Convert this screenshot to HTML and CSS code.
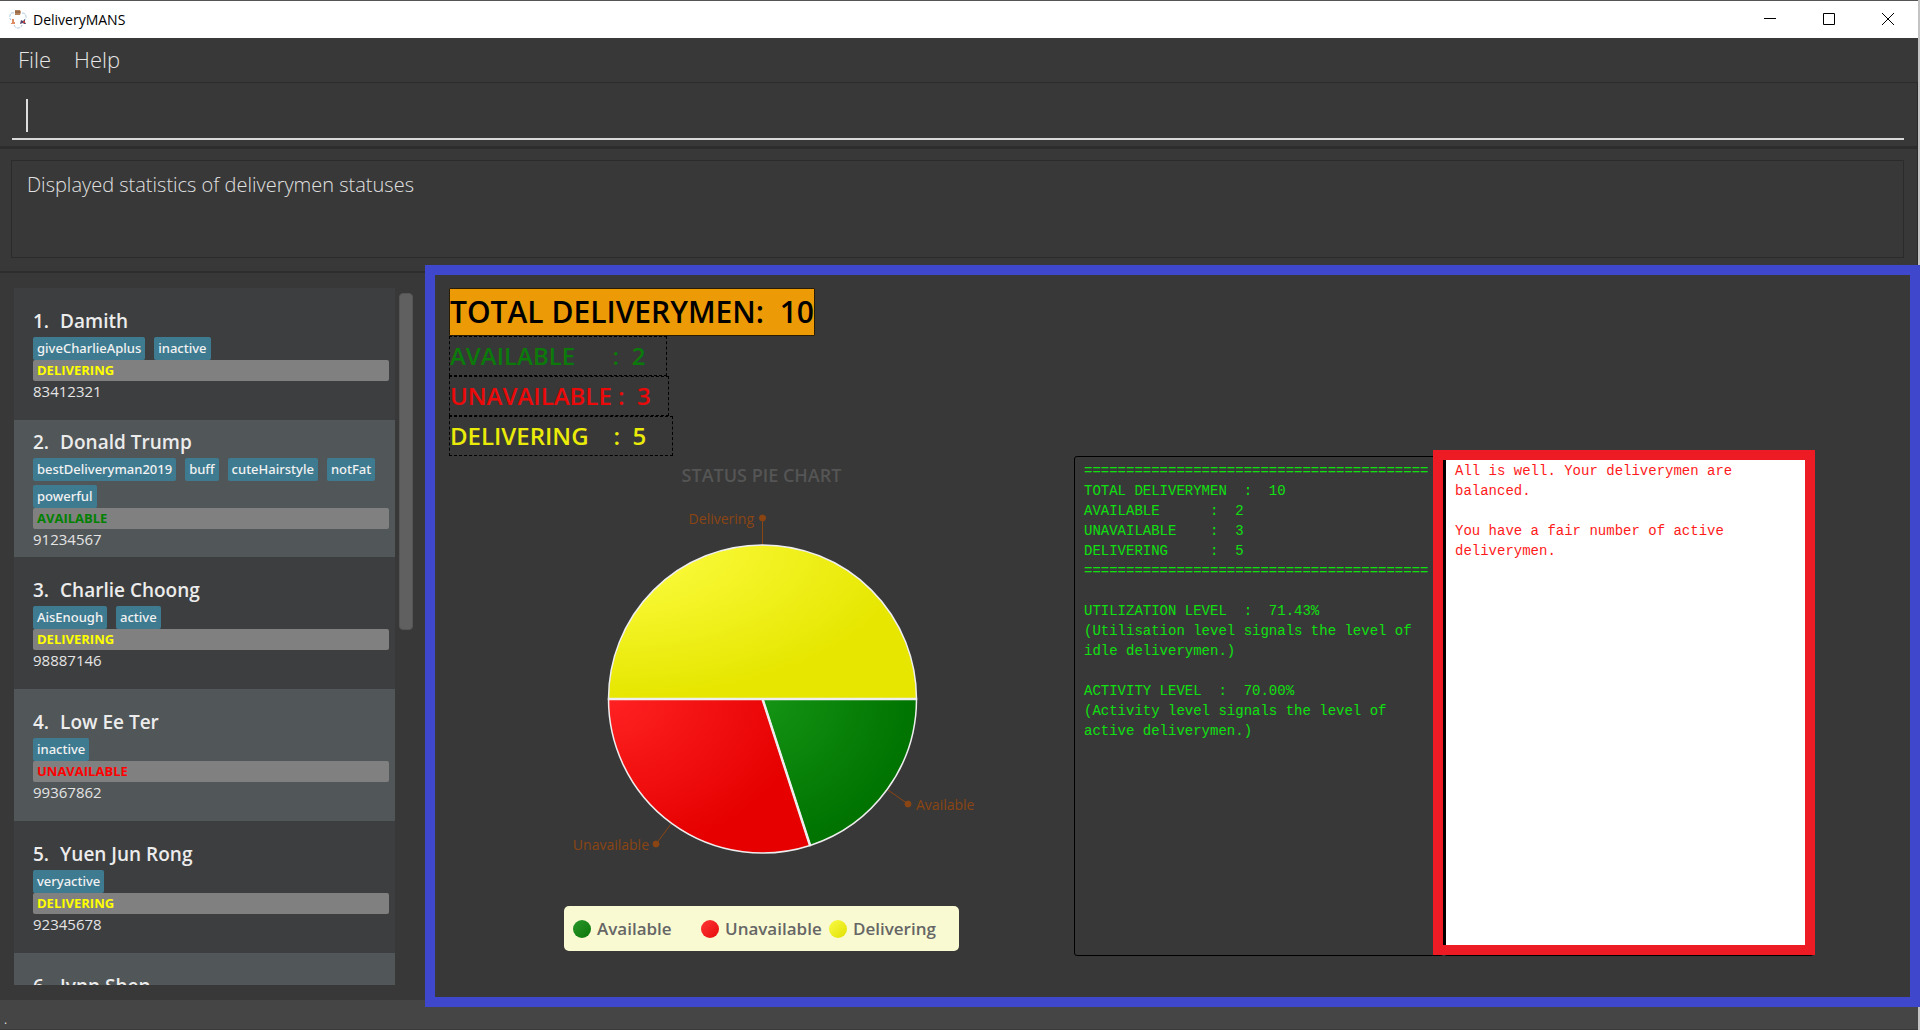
FILE: index.html
```html
<!DOCTYPE html>
<html lang="en">
<head>
<meta charset="utf-8">
<title>DeliveryMANS</title>
<link rel="stylesheet" href="styles.css">
</head>
<body>
<div class="window">
  <header class="titlebar">
    <svg class="app-icon" width="18" height="20" viewBox="0 0 18 20" aria-hidden="true">
      <path d="M5 4 Q1 3 1 7 Q0 9 2 11 M13 4 Q17 4 17 8 Q18 10 15 11 M5 16 Q6 19 9 19 Q12 19 13 16" fill="none" stroke="#a9c6dc" stroke-width="1" stroke-dasharray="3 1"/>
      <path d="M6 1 h5 l1 2 -1 3 h-5 z" fill="#b5835c"/>
      <path d="M6 3 h5" stroke="#7d5138"/>
      <path d="M3 10 h2 v3 h1 v2 h-4 v-1 h1 z" fill="#e08a63"/>
      <path d="M12 11 l2 1 2 -2 v3 l1 2 h-2 l-1 -1 -3 1 z" fill="#51476b"/>
      <path d="M14 12 h2 v2 h-2 z" fill="#c8433f"/>
    </svg>
    <h1 class="app-title">DeliveryMANS</h1>
    <div class="window-controls">
      <button class="control" type="button" aria-label="Minimize"><svg width="12" height="12" viewBox="0 0 12 12"><path d="M0 5.5h12" stroke="#000"/></svg></button>
      <button class="control" type="button" aria-label="Maximize"><svg width="12" height="12" viewBox="0 0 12 12"><path d="M.5.5h11v11h-11z" fill="none" stroke="#000"/></svg></button>
      <button class="control" type="button" aria-label="Close"><svg width="12" height="12" viewBox="0 0 12 12"><path d="M0 0l12 12M12 0L0 12" stroke="#000"/></svg></button>
    </div>
  </header>

  <nav class="menubar">
    <button class="menu" type="button">File</button>
    <button class="menu" type="button">Help</button>
  </nav>

  <div class="command-pane">
    <div class="command-field">
      <input class="command-input" type="text" aria-label="Command">
      <span class="caret"></span>
    </div>
  </div>

  <div class="result-pane">
    <div class="result" role="status">Displayed statistics of deliverymen statuses</div>
  </div>

  <main class="main">
    <section class="list-pane" aria-label="Deliverymen">
      <ol class="list">
        <li class="cell">
          <h2 class="name"><span>1.</span><span>Damith</span></h2>
          <div class="tags"><span class="tag">giveCharlieAplus</span><span class="tag">inactive</span></div>
          <div class="status delivering">DELIVERING</div>
          <div class="phone">83412321</div>
        </li>
        <li class="cell">
          <h2 class="name"><span>2.</span><span>Donald Trump</span></h2>
          <div class="tags"><span class="tag">bestDeliveryman2019</span><span class="tag">buff</span><span class="tag">cuteHairstyle</span><span class="tag">notFat</span><span class="tag">powerful</span></div>
          <div class="status available">AVAILABLE</div>
          <div class="phone">91234567</div>
        </li>
        <li class="cell">
          <h2 class="name"><span>3.</span><span>Charlie Choong</span></h2>
          <div class="tags"><span class="tag">AisEnough</span><span class="tag">active</span></div>
          <div class="status delivering">DELIVERING</div>
          <div class="phone">98887146</div>
        </li>
        <li class="cell">
          <h2 class="name"><span>4.</span><span>Low Ee Ter</span></h2>
          <div class="tags"><span class="tag">inactive</span></div>
          <div class="status unavailable">UNAVAILABLE</div>
          <div class="phone">99367862</div>
        </li>
        <li class="cell">
          <h2 class="name"><span>5.</span><span>Yuen Jun Rong</span></h2>
          <div class="tags"><span class="tag">veryactive</span></div>
          <div class="status delivering">DELIVERING</div>
          <div class="phone">92345678</div>
        </li>
        <li class="cell">
          <h2 class="name"><span>6.</span><span>Jynn Shen</span></h2>
        </li>
      </ol>
      <div class="scrollbar"><div class="thumb"></div></div>
    </section>

    <section class="stats-pane" aria-label="Statistics">
      <div class="totals">
        <div class="total">TOTAL DELIVERYMEN:  10</div>
        <div class="count count-available">AVAILABLE      :  2</div>
        <div class="count count-unavailable">UNAVAILABLE :  3</div>
        <div class="count count-delivering">DELIVERING    :  5</div>
      </div>
      <div class="details">
        <div class="chart">
          <h2 class="chart-title">STATUS PIE CHART</h2>
          <svg class="pie" width="625" height="414" viewBox="0 0 625 414" role="img" aria-label="Status pie chart">
            <defs>
              <radialGradient id="g-yellow" cx="0" cy="0" r="1"><stop offset="0" stop-color="#ffff48"/><stop offset="1" stop-color="#e6e600"/></radialGradient>
              <radialGradient id="g-red" cx="0" cy="0" r="1"><stop offset="0" stop-color="#ff2222"/><stop offset="1" stop-color="#e60000"/></radialGradient>
              <radialGradient id="g-green" cx="0" cy="0" r="1"><stop offset="0" stop-color="#149414"/><stop offset="1" stop-color="#007300"/></radialGradient>
            </defs>
            <g class="leader">
              <path d="M313.500 54V26M439 298L459 312M222 332L207 352"/>
              <circle cx="313.500" cy="26" r="3"/><circle cx="459" cy="312" r="3"/><circle cx="207" cy="352" r="3"/>
            </g>
            <g stroke="#eee" stroke-width="1.500">
              <path d="M313.500 207H467.500A154 154 0 0 1 361.100 353.500Z" fill="url(#g-green)"/>
              <path d="M313.500 207L361.100 353.500A154 154 0 0 1 159.500 207Z" fill="url(#g-red)"/>
              <path d="M159.500 207A154 154 0 0 1 467.500 207Z" fill="url(#g-yellow)"/>
              <path d="M159.500 207H467.500M313.500 207L361.100 353.500" stroke-width="2.500"/>
            </g>
            <g class="pie-label">
              <text x="305" y="32" text-anchor="end">Delivering</text>
              <text x="467" y="318">Available</text>
              <text x="200" y="358" text-anchor="end">Unavailable</text>
            </g>
          </svg>
          <ul class="legend">
            <li class="legend-item"><span class="dot dot-green"></span>Available</li>
            <li class="legend-item"><span class="dot dot-red"></span>Unavailable</li>
            <li class="legend-item"><span class="dot dot-yellow"></span>Delivering</li>
          </ul>
        </div>
        <div class="reports">
          <textarea class="report report-stats" readonly aria-label="Statistics report">=========================================
TOTAL DELIVERYMEN  :  10
AVAILABLE      :  2
UNAVAILABLE    :  3
DELIVERING     :  5
=========================================

UTILIZATION LEVEL  :  71.43%
(Utilisation level signals the level of
idle deliverymen.)

ACTIVITY LEVEL  :  70.00%
(Activity level signals the level of
active deliverymen.)</textarea>
          <div class="advice">
            <textarea class="report report-advice" readonly aria-label="Advice">All is well. Your deliverymen are
balanced.

You have a fair number of active
deliverymen.</textarea>
          </div>
        </div>
      </div>
    </section>
  </main>

  <footer class="statusbar">.</footer>
</div>
</body>
</html>
```

FILE: styles.css
```css
* {
  box-sizing: border-box;
}

body {
  margin: 0;
  background: #c4c4c4;
  font-family: "Open Sans", "Noto Sans", sans-serif;
}

h1, h2, ol, ul {
  margin: 0;
  padding: 0;
  list-style: none;
}

button {
  padding: 0;
  border: 0;
  background: none;
  font: inherit;
  color: inherit;
}

.window {
  display: flex;
  flex-direction: column;
  height: 100vh;
  margin-right: 2px;
  background: #383838;
}

/* Title bar */
.titlebar {
  display: flex;
  align-items: center;
  height: 38px;
  padding: 0 1px 1px 9px;
  border-top: 1px solid #555;
  background: #fff;
}

.app-title {
  flex: 1;
  margin-left: 6px;
  font-size: 14px;
  font-weight: 400;
  color: #000;
}

.window-controls {
  display: flex;
  height: 100%;
}

.control {
  display: flex;
  align-items: center;
  justify-content: center;
  width: 59px;
}

/* Menu */
.menubar {
  display: flex;
  gap: 23px;
  height: 45px;
  padding: 0 18px 2px;
  border-bottom: 1px solid #2b2b2b;
  font-size: 22px;
  font-weight: 300;
  color: #e6e6e6;
}

/* Command box */
.command-pane {
  height: 66px;
  padding: 8px 13px 0 12px;
  border-bottom: 3px solid #2d2d2d;
  border-right: 1px solid #2b2b2b;
}

.command-field {
  position: relative;
  height: 49px;
  border-bottom: 2px solid #d8d8d8;
}

.command-input {
  width: 100%;
  height: 100%;
  padding: 0 14px;
  border: 0;
  outline: 0;
  background: transparent;
  font: 300 22px "Open Sans", sans-serif;
  color: #fff;
}

.caret {
  position: absolute;
  left: 14px;
  top: 8px;
  width: 2px;
  height: 33px;
  background: #ddd;
}

/* Result display */
.result-pane {
  height: 124px;
  padding: 11px 13px 13px 11px;
  border-bottom: 2px solid #2d2d2d;
  border-right: 1px solid #2b2b2b;
}

.result {
  height: 98px;
  padding: 9px 15px;
  border: 1px solid #2b2b2b;
  font-size: 20px;
  line-height: 30px;
  font-weight: 300;
  color: #e0e0e0;
}

/* List and statistics */
.main {
  display: flex;
  flex: 1;
  min-height: 0;
}

.list-pane {
  display: flex;
  flex: none;
  gap: 4px;
  width: 425px;
  padding: 15px 12px 15px 14px;
}

.list {
  width: 381px;
  overflow: hidden;
}

.cell {
  display: flex;
  flex-direction: column;
  justify-content: center;
  min-height: 132px;
  padding: 9px 6px 7px 19px;
  background: #3c3e3f;
}

.cell:nth-child(even) {
  background: #515658;
}

.cell:last-child {
  justify-content: flex-start;
  padding-top: 20px;
}

.name {
  display: flex;
  gap: 11px;
  padding-bottom: 3px;
  font-size: 19px;
  line-height: 26px;
  font-weight: 600;
  color: #ececec;
}

.tags {
  display: flex;
  flex-wrap: wrap;
  gap: 4px 9px;
}

.tag {
  padding: 0 4px;
  border-radius: 2px;
  background: #3e7b91;
  font-family: "Noto Sans", "Open Sans", sans-serif;
  font-size: 13px;
  line-height: 23px;
  font-weight: 500;
  color: #f2f2f2;
}

.status {
  padding: 0 4px;
  border-radius: 2px;
  background: #808080;
  font-size: 13px;
  line-height: 21px;
  font-weight: 700;
}

.delivering {
  color: #ff0;
}

.available {
  color: #008000;
}

.unavailable {
  color: #f00;
}

.phone {
  font-size: 15px;
  line-height: 21px;
  color: #e4e4e4;
}

.scrollbar {
  width: 14px;
  padding: 5px 0;
}

.thumb {
  height: 49%;
  border: 1px solid #555;
  border-radius: 4px;
  background: #606060;
}

.stats-pane {
  position: relative;
  flex: 1;
  padding: 15px 104px 0 24px;
}

.stats-pane::after {
  content: "";
  position: absolute;
  inset: -8px -2px -7px 0;
  border: 10px solid #3f48cc;
  pointer-events: none;
}

.totals {
  display: flex;
  flex-direction: column;
  align-items: flex-start;
}

.total {
  width: 366px;
  border: 1px solid #2a1c00;
  border-radius: 1px;
  background: #ec9a06;
  font-size: 30px;
  line-height: 46px;
  font-weight: 600;
  color: #000;
  white-space: pre;
}

.count {
  border: 1px dashed #000;
  font-size: 24px;
  line-height: 38px;
  font-weight: 600;
  white-space: pre;
}

.count-available {
  width: 218px;
  color: #0b7a0b;
}

.count-unavailable {
  width: 220px;
  color: #eb0a0a;
}

.count-delivering {
  width: 224px;
  color: #ebeb0a;
}

.details {
  display: flex;
  align-items: flex-start;
}

/* Pie chart */
.chart {
  display: flex;
  flex: 1;
  flex-direction: column;
  align-items: center;
}

.chart-title {
  padding-top: 2px;
  font-size: 18px;
  line-height: 34px;
  font-weight: 600;
  color: #555;
}

.pie {
  display: block;
}

.leader {
  fill: #8b4513;
  stroke: #8b4513;
}

.pie-label {
  font-size: 14px;
  fill: #8b4513;
}

.legend {
  display: flex;
  width: 395px;
  height: 45px;
  padding-left: 9px;
  border-radius: 5px;
  background: #f9fad2;
  font-size: 17px;
  font-weight: 600;
  color: #666;
}

.legend-item {
  display: flex;
  align-items: center;
  gap: 6px;
  width: 128px;
}

.dot {
  width: 18px;
  height: 18px;
  border-radius: 50%;
}

.dot-green {
  background: linear-gradient(135deg, #299629, #0c780c);
}

.dot-red {
  background: linear-gradient(135deg, #ff3636, #e60c0c);
}

.dot-yellow {
  background: linear-gradient(135deg, #fafa48, #e0e000);
}

/* Text reports */
.reports {
  display: grid;
  grid-template-columns: 1fr 1fr;
  width: 740px;
  height: 500px;
}

.report {
  display: block;
  width: 100%;
  height: 100%;
  padding: 4px 9px;
  border: 1px solid #000;
  border-radius: 3px;
  outline: 0;
  resize: none;
  overflow: hidden;
  font: 14px/20px "Liberation Mono", "DejaVu Sans Mono", monospace;
}

.report-stats {
  background: #383838;
  color: #10e010;
}

.advice {
  position: relative;
}

.report-advice {
  border-left-width: 2px;
  background: #fff;
  color: #ff1a1a;
}

.advice::after {
  content: "";
  position: absolute;
  inset: -6px -1px 1px -11px;
  border: 10px solid #ed1c24;
  pointer-events: none;
}

.statusbar {
  height: 30px;
  padding-left: 4px;
  border-bottom: 1px solid #3a3a3a;
  background: #454545;
  font-size: 12px;
  line-height: 40px;
  color: #ddd;
}
```
